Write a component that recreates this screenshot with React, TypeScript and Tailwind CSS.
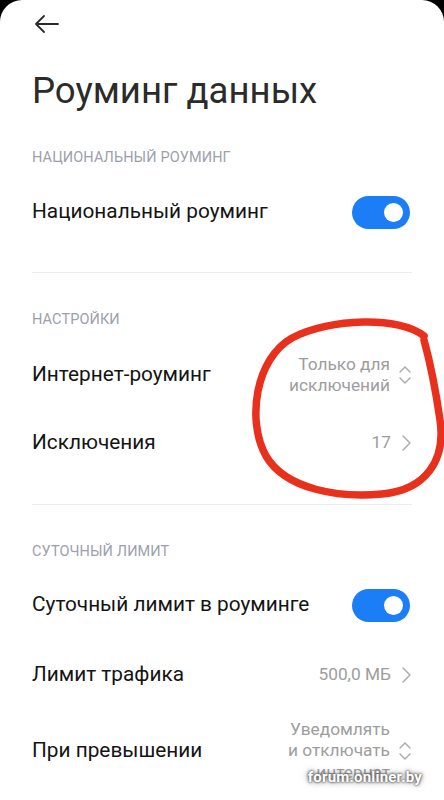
import React from "react";

const font = { fontFamily: "Roboto, 'Noto Sans', 'Liberation Sans', sans-serif" };

function Toggle() {
  return (
    <div className="w-[58px] h-[33px] rounded-full bg-[#1b7ef6] flex items-center justify-end pr-[7px]">
      <div className="w-[19px] h-[19px] rounded-full bg-white" />
    </div>
  );
}

function ChevronRight() {
  return (
    <svg width="12" height="18" viewBox="0 0 12 18" className="ml-[9px]">
      <path d="M3 2 L10 9 L3 16" fill="none" stroke="#a8a8a8" strokeWidth="1.4" strokeLinecap="round" strokeLinejoin="round" />
    </svg>
  );
}

function ChevronUpDown() {
  return (
    <svg width="14" height="22" viewBox="0 0 14 22" className="ml-[8px]">
      <path d="M2 8 L7 3 L12 8" fill="none" stroke="#a8a8a8" strokeWidth="1.4" strokeLinecap="round" strokeLinejoin="round" />
      <path d="M2 14 L7 19 L12 14" fill="none" stroke="#a8a8a8" strokeWidth="1.4" strokeLinecap="round" strokeLinejoin="round" />
    </svg>
  );
}

function Header({ text, mt }: { text: string; mt: string }) {
  return (
    <div className={`h-[24px] flex items-center text-[14.5px] text-[#9c9fac] tracking-[0.1px] ${mt}`}>{text}</div>
  );
}

function Label({ children }: { children: React.ReactNode }) {
  return <div className="text-[20.8px] text-[#141414]">{children}</div>;
}

function Value({ children }: { children: React.ReactNode }) {
  return <div className="text-[17.3px] leading-[21.5px] text-[#9d9d9d] text-right">{children}</div>;
}

export default function App() {
  return (
    <div className="w-[444px] h-[800px] bg-black overflow-hidden" style={font}>
      <div className="relative w-full h-full bg-white rounded-t-[22px] px-[32px]">
        <div className="h-[48px] flex items-center">
          <svg width="26" height="18" viewBox="0 0 26 18" className="ml-[2px]">
            <path d="M24 9 H2 M10 1 L2 9 L10 17" fill="none" stroke="#2a2a2a" strokeWidth="1.8" strokeLinecap="round" strokeLinejoin="round" />
          </svg>
        </div>
        <div className="mt-[19px] h-[48px] flex items-center text-[36.6px] text-[#2b2b2b] leading-[48px]">Роуминг данных</div>

        <Header text="НАЦИОНАЛЬНЫЙ РОУМИНГ" mt="mt-[31px]" />
        <div className="mt-[9px] h-[66px] flex items-center justify-between">
          <Label>Национальный роуминг</Label>
          <div className="mr-[2px]"><Toggle /></div>
        </div>
        <div className="mt-[27px] h-px bg-[#ececec]" />

        <Header text="НАСТРОЙКИ" mt="mt-[35px]" />
        <div className="mt-[10px] h-[66px] flex items-center justify-between">
          <Label>Интернет-роуминг</Label>
          <div className="flex items-center">
            <Value>
              <div>Только для</div>
              <div>исключений</div>
            </Value>
            <ChevronUpDown />
          </div>
        </div>
        <div className="mt-[1px] h-[68px] flex items-center justify-between">
          <Label>Исключения</Label>
          <div className="flex items-center">
            <Value>17</Value>
            <ChevronRight />
          </div>
        </div>
        <div className="mt-[27px] h-px bg-[#ececec]" />

        <Header text="СУТОЧНЫЙ ЛИМИТ" mt="mt-[35px]" />
        <div className="mt-[8px] h-[66px] flex items-center justify-between">
          <Label>Суточный лимит в роуминге</Label>
          <div className="mr-[2px]"><Toggle /></div>
        </div>
        <div className="mt-[4px] h-[66px] flex items-center justify-between">
          <Label>Лимит трафика</Label>
          <div className="flex items-center">
            <Value>500,0 МБ</Value>
            <ChevronRight />
          </div>
        </div>
        <div className="mt-[10px] h-[66px] flex items-center justify-between">
          <Label>При превышении</Label>
          <div className="flex items-center">
            <Value>
              <div>Уведомлять</div>
              <div>и отключать</div>
              <div>интернет</div>
            </Value>
            <ChevronUpDown />
          </div>
        </div>

        <svg className="absolute left-0 top-0 pointer-events-none" width="444" height="800" viewBox="0 0 444 800">
          <path
            d="M424 336 C 400 316, 330 318, 292 338 C 256 358, 246 420, 266 456 C 286 490, 340 498, 382 494 C 426 490, 446 460, 440 420 C 436 392, 430 362, 424 340"
            fill="none"
            stroke="#e8301c"
            strokeWidth="7.5"
            strokeLinecap="round"
            strokeLinejoin="round"
          />
        </svg>

        <div
          className="absolute right-[22px] bottom-[12px] text-[15px] font-bold text-white tracking-[0.2px]"
          style={{ textShadow: "0 0 3px #555, 0 0 6px #777, 0 0 2px #444" }}
        >
          forum.onliner.by
        </div>
      </div>
    </div>
  );
}
